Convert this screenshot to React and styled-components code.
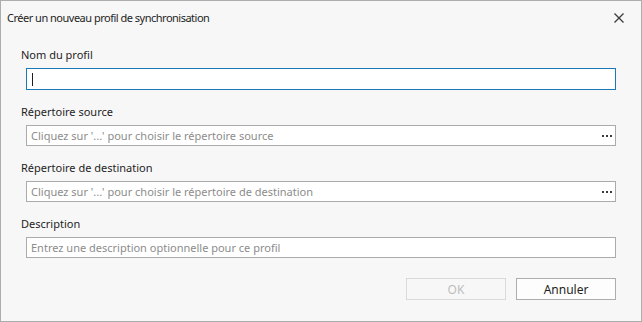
import React from 'react';
import styled, { createGlobalStyle } from 'styled-components';

const GlobalStyle = createGlobalStyle`
	html, body {
		margin: 0;
		padding: 0;
		background: #f7f7f7;
	}
	* {
		box-sizing: border-box;
	}
`;

const Window = styled.div`
	width: 642px;
	height: 322px;
	border: 1px solid #adadad;
	background: #f7f7f7;
	display: flex;
	flex-direction: column;
	font-family: 'Noto Sans', 'Open Sans', sans-serif;
	font-size: 11px;
	color: #1e1e1e;
`;

const TitleBar = styled.div`
	height: 33px;
	display: flex;
	align-items: center;
	justify-content: space-between;
	padding: 0 17px 0 6px;
`;

const Title = styled.h1`
	margin: 0;
	font-size: 11px;
	font-weight: normal;
	letter-spacing: -0.5px;
	line-height: 16px;
	color: #1e1e1e;
`;

const CloseButton = styled.button`
	border: none;
	background: transparent;
	padding: 0;
	width: 10px;
	height: 10px;
	display: flex;
	cursor: pointer;
`;

const Form = styled.form`
	flex: 1;
	display: flex;
	flex-direction: column;
	gap: 14px;
	padding: 13px 25px 0 19px;
`;

const Field = styled.div`
	display: flex;
	flex-direction: column;
	gap: 5px;
`;

const Label = styled.label`
	line-height: 16px;
	padding-left: 1px;
`;

const InputBox = styled.div`
	margin-left: 6px;
	height: ${(p) => (p.$tall ? '22px' : '21px')};
	display: flex;
	align-items: center;
	background: #fff;
	border: 1px solid ${(p) => (p.$focused ? '#1a78b4' : '#ababab')};
	padding: 0 3px 0 4px;
`;

const Caret = styled.span`
	width: 1px;
	height: 13px;
	background: #1e1e1e;
	margin-left: 1px;
`;

const TextInput = styled.input`
	flex: 1;
	min-width: 0;
	border: none;
	outline: none;
	background: transparent;
	padding: 0;
	font: inherit;
	color: #1e1e1e;

	&::placeholder {
		color: #8c8c8c;
		opacity: 1;
	}
`;

const BrowseButton = styled.button`
	border: none;
	background: transparent;
	padding: 0;
	width: 10px;
	height: 2px;
	display: flex;
	cursor: pointer;
`;

const Actions = styled.div`
	display: flex;
	justify-content: flex-end;
	gap: 10px;
	margin-top: 6px;
`;

const Button = styled.button`
	width: 100px;
	height: 22px;
	padding: 0;
	font: inherit;
	font-size: 12px;
	background: ${(p) => (p.disabled ? '#f7f7f7' : '#fdfdfd')};
	color: ${(p) => (p.disabled ? '#bdbdbd' : '#1e1e1e')};
	border: 1px solid ${(p) => (p.disabled ? '#dadada' : '#adadad')};
`;

function CloseIcon() {
	return (
		<svg width='10' height='10' viewBox='0 0 10 10'>
			<path d='M0.5 0.5 L9.5 9.5 M9.5 0.5 L0.5 9.5' stroke='#3a3a3a' strokeWidth='1.3' />
		</svg>
	);
}

function Dots() {
	return (
		<svg width='10' height='2' viewBox='0 0 10 2'>
			<rect x='0' y='0' width='2' height='2' fill='#3c3c3c' />
			<rect x='4' y='0' width='2' height='2' fill='#3c3c3c' />
			<rect x='8' y='0' width='2' height='2' fill='#3c3c3c' />
		</svg>
	);
}

const fields = [
	{ id: 'source', label: 'Répertoire source', placeholder: "Cliquez sur '...' pour choisir le répertoire source", browse: true },
	{ id: 'dest', label: 'Répertoire de destination', placeholder: "Cliquez sur '...' pour choisir le répertoire de destination", browse: true },
	{ id: 'desc', label: 'Description', placeholder: 'Entrez une description optionnelle pour ce profil' },
];

function App() {
	return (
		<>
			<GlobalStyle />
			<Window>
				<TitleBar>
					<Title>Créer un nouveau profil de synchronisation</Title>
					<CloseButton aria-label='Fermer'>
						<CloseIcon />
					</CloseButton>
				</TitleBar>
				<Form onSubmit={(e) => e.preventDefault()}>
					<Field>
						<Label htmlFor='name'>Nom du profil</Label>
						<InputBox $focused $tall>
							<Caret />
							<TextInput id='name' />
						</InputBox>
					</Field>
					{fields.map((f) => (
						<Field key={f.id}>
							<Label htmlFor={f.id}>{f.label}</Label>
							<InputBox>
								<TextInput id={f.id} placeholder={f.placeholder} readOnly={f.browse} />
								{f.browse && (
									<BrowseButton type='button' aria-label='Parcourir'>
										<Dots />
									</BrowseButton>
								)}
							</InputBox>
						</Field>
					))}
					<Actions>
						<Button type='submit' disabled>OK</Button>
						<Button type='button'>Annuler</Button>
					</Actions>
				</Form>
			</Window>
		</>
	);
}

export default App;
